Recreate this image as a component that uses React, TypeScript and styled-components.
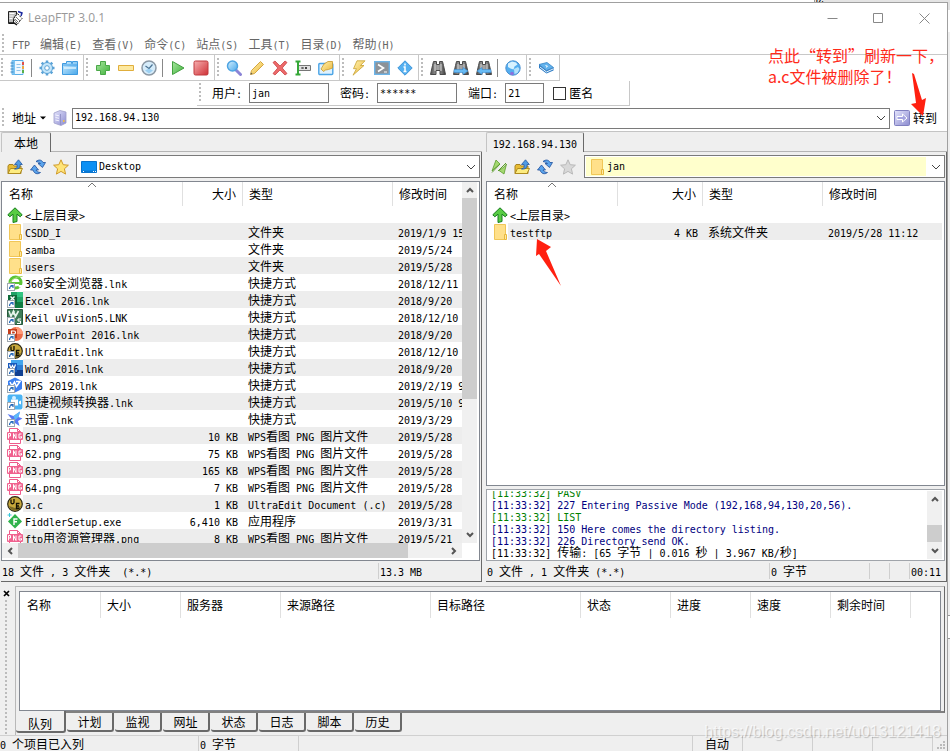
import React from "react";
import styled, { createGlobalStyle, css } from "styled-components";

const Global = createGlobalStyle`
  *, *::before, *::after { box-sizing: border-box; }
  html, body { margin: 0; padding: 0; }
  body {
    font-family: "Noto Sans CJK SC", sans-serif;
    font-size: 12px;
    line-height: 16px;
    color: #000;
    background: #fff;
    overflow: hidden;
  }
  button, input, select { font: inherit; color: inherit; }
  button { padding: 0; border: 0; background: none; }
  svg { display: block; flex: none; }
`;

/* ---------- text ---------- */

const Latin = styled.span`
  font-family: "DejaVu Sans Mono", monospace;
  font-size: 10px;
  line-height: 10px;
  white-space: pre;
`;

/* Half-width characters take half the advance of the Chinese ones. */
function T({ children }: { children: string }) {
  const parts = children.split(/([\u2e80-\uffff]+)/).filter(Boolean);
  return (
    <>
      {parts.map((p, i) =>
        /[\u2e80-\uffff]/.test(p) ? <React.Fragment key={i}>{p}</React.Fragment> : <Latin key={i}>{p}</Latin>
      )}
    </>
  );
}

/* ---------- icons ---------- */

const Svg = ({ children, w = 16, h = 16 }: { children: React.ReactNode; w?: number; h?: number }) => (
  <svg width={w} height={h} viewBox={`0 0 ${w} ${h}`} aria-hidden="true">{children}</svg>
);

const HiddenDefs = styled.svg`
  position: absolute;
`;
const Gradients = () => (
  <HiddenDefs width="0" height="0" aria-hidden="true">
    <defs>
      <linearGradient id="blue" x1="0" y1="0" x2="1" y2="1"><stop offset="0" stopColor="#d4f0ff" /><stop offset="1" stopColor="#4aa8ea" /></linearGradient>
      <linearGradient id="green" x1="0" y1="0" x2="1" y2="1"><stop offset="0" stopColor="#a8e6a0" /><stop offset="1" stopColor="#3fb23a" /></linearGradient>
      <linearGradient id="red" x1="0" y1="0" x2="1" y2="1"><stop offset="0" stopColor="#f6b0b0" /><stop offset="1" stopColor="#cf2f35" /></linearGradient>
      <linearGradient id="gold" x1="0" y1="0" x2="1" y2="1"><stop offset="0" stopColor="#fff3b0" /><stop offset="1" stopColor="#ecb63a" /></linearGradient>
      <linearGradient id="dark" x1="0" y1="0" x2="1" y2="0"><stop offset="0" stopColor="#555" /><stop offset=".5" stopColor="#aaa" /><stop offset="1" stopColor="#3c3c3c" /></linearGradient>
      <linearGradient id="violet" x1="0" y1="0" x2="1" y2="1"><stop offset="0" stopColor="#e4e4fc" /><stop offset="1" stopColor="#8c8cd0" /></linearGradient>
    </defs>
  </HiddenDefs>
);

const AppIcon = () => (
  <Svg>
    <path d="M1.500 1.500h8v3l-3 4v5h-5z" fill="#bdbdbd" stroke="#222" />
    <path d="M2.500 3.500h5M2.500 6h4M2.500 8.500h3" stroke="#fff" />
    <path d="M2 13h5l3 2" stroke="#111" fill="none" strokeWidth="1.500" />
    <path d="M10.500 3.500l4.500 5-4.500 5.500-4-5z" fill="#fff" stroke="#222" strokeDasharray="2 1" />
    <path d="M9 7l4 4M8 9l3 3" stroke="#777" />
    <path d="M11 1.500l4 1.500-1 3" stroke="#1c2aa0" fill="none" strokeWidth="1.500" />
  </Svg>
);
const SiteBook = () => (
  <Svg>
    <path d="M2 .5h11v14H2z" fill="#eef8ff" stroke="#5aaee6" />
    <path d="M2 .5h3v14H2z" fill="#7cc4f2" />
    <path d="M.5 3h3M.5 6h3M.5 9h3M.5 12h3" stroke="#3a86c4" />
    <path d="M6.500 4.500h4M6.500 7.500h4M6.500 10.500h4" stroke="#8fc4ea" />
    <path d="M12 2h2v3h-2z" fill="#e0504a" /><path d="M12 6h2v3h-2z" fill="#f0a840" /><path d="M12 10h2v3h-2z" fill="#58b04a" />
  </Svg>
);
const Gear = () => (
  <Svg>
    <g stroke="#5aa2d6" strokeWidth="2.500">
      <path d="M8 .5v15M.5 8h15M2.700 2.700l10.600 10.600M13.300 2.700L2.700 13.300" />
    </g>
    <circle cx="8" cy="8" r="5.500" fill="#c4e6fa" stroke="#5aa2d6" />
    <circle cx="8" cy="8" r="2.300" fill="#fff" stroke="#5aa2d6" />
  </Svg>
);
const Tabs = () => (
  <Svg>
    <path d="M.5 3.500h4v-2h5v2h1v-2h5v13H.5z" fill="url(#blue)" stroke="#3f9be0" />
    <path d="M1 4.500h14v1H1z" fill="#3f9fe8" />
    <path d="M2 7h12v2H2z" fill="#e4f6ff" opacity=".7" />
  </Svg>
);
const Plus = () => <Svg><path d="M5.500 1.500h5v4h4v5h-4v4h-5v-4h-4v-5h4z" fill="url(#green)" stroke="#4aa848" /></Svg>;
const Minus = () => <Svg><path d="M.5 5.500h15v5H.5z" fill="#fde9a0" stroke="#e0ae3c" /></Svg>;
const Clock = () => (
  <Svg>
    <circle cx="8" cy="8" r="7" fill="#d6ecfa" stroke="#8b98a4" strokeWidth="1.500" />
    <path d="M4 10.500l4-2 4 2-4 3z" fill="#9cd0f2" />
    <path d="M8 8.500l3.500-4M8 8.500L4.500 6" stroke="#4c7494" strokeWidth="1.200" fill="none" />
  </Svg>
);
const Play = () => <Svg><path d="M2.500 1.500L14 8 2.500 14.500z" fill="url(#green)" stroke="#43a040" /></Svg>;
const Stop = () => <Svg><rect x="1" y="1" width="14" height="14" rx="1.500" fill="url(#red)" stroke="#c03a3e" /></Svg>;
const Search = () => (
  <Svg>
    <path d="M10 10l4.500 4.500" stroke="#8b84d6" strokeWidth="3" strokeLinecap="round" />
    <circle cx="6.500" cy="6" r="5" fill="url(#blue)" stroke="#4ea4e2" strokeWidth="1.500" />
  </Svg>
);
const Pencil = () => <Svg><path d="M1.500 14.500l1-4 9-9 3 3-9 9z" fill="url(#gold)" stroke="#d4a640" /><path d="M1.500 14.500l.5-2 1.500 1.500z" fill="#555" /></Svg>;
const Cross = () => <Svg><path d="M1 2.500L3 1l5 5 5-5 2 1.500L10.200 8l4.800 5.500-2 1.500-5-5-5 5-2-1.500L5.800 8z" fill="#ec6a6a" stroke="#cc4448" strokeWidth=".8" /></Svg>;
const Rename = () => (
  <Svg>
    <path d="M3.500 5.500h12v5h-12z" fill="#e0e0e0" stroke="#777" />
    <path d="M6.500 9l2-2M6.500 7l2 2M10 9l2-2M10 7l2 2" stroke="#444" />
    <path d="M.5 1.500h5M3 1.500v13M.5 14.500h5" stroke="#35a838" strokeWidth="2" />
  </Svg>
);
const EditFolder = () => (
  <Svg>
    <rect x=".8" y="3.500" width="14" height="11" rx="1" fill="#dff2ff" stroke="#4aa4e6" strokeWidth="1.400" />
    <path d="M3 9l3-5 4-2.500h4.500V8l-4 1.500-3 .5-2 1.500z" fill="url(#gold)" stroke="#c8982c" strokeWidth=".8" />
  </Svg>
);
const Bolt = () => <Svg><path d="M6 .8h8L9.500 5.500h3.500L2 15.200l3.500-6.500H2.500z" fill="url(#gold)" stroke="#c8a232" strokeWidth=".8" /></Svg>;
const Terminal = () => (
  <Svg>
    <rect x=".7" y="1.700" width="14.600" height="12.600" fill="#8c9298" stroke="#6cb4e8" strokeWidth="1.400" />
    <path d="M4 4.500l5.500 3.500L4 11.500" fill="none" stroke="#fff" strokeWidth="1.600" />
    <path d="M10 12h3" stroke="#fff" />
  </Svg>
);
const Info = () => (
  <Svg>
    <path d="M8 .8L15.200 8 8 15.200.8 8z" fill="#55b0f0" stroke="#3f94d8" />
    <path d="M8 3.500v2M6.500 7H8v4.500M6.500 11.500h3" stroke="#fff" strokeWidth="1.500" fill="none" />
  </Svg>
);
const Glass = ({ arrow }: { arrow?: "left" | "right" }) => (
  <Svg>
    <path d="M3.500 1.500h3v3h3v-3h3l1 4 2 9h-5.500v-4h-4v4H.5l2-9z" fill="url(#dark)" stroke="#4a4a4a" />
    <path d="M5 4v7M11 4v7" stroke="#d8d8d8" />
    {arrow === "right" && <path d="M1 9.500h9v-2l5 3.500-5 3.500v-2H1z" fill="#68bbf4" stroke="#3d8cd0" strokeWidth=".6" />}
    {arrow === "left" && <path d="M15 9.500H6v-2L1 11l5 3.500v-2h9z" fill="#68bbf4" stroke="#3d8cd0" strokeWidth=".6" />}
  </Svg>
);
const Globe = () => (
  <Svg>
    <circle cx="8" cy="8" r="7.200" fill="#54aef0" stroke="#4a90d0" />
    <path d="M3 3.500l4-2 4 1 1.500 2-3 2-1 3-3-1L3 7z" fill="#d8f2ff" />
    <path d="M9 9l4-2 1.500 2-2 4-3 1z" fill="#b4e2fc" />
    <circle cx="7" cy="13.500" r="1.800" fill="#8c70dc" />
  </Svg>
);
const Book = () => (
  <Svg>
    <path d="M1 4.500l8-2 6.500 5-7 3z" fill="#62b2ec" stroke="#3484c8" strokeWidth=".8" />
    <path d="M1 4.500v3.500l7.500 5.500 7-3V7.500l-7 3z" fill="#2f7cc4" />
    <path d="M2 7l6.500 5 6.500-3" stroke="#e8f6ff" fill="none" />
    <path d="M7.500 5.500l2 .8-1.500 1" stroke="#fff" fill="none" />
  </Svg>
);
const Server = () => (
  <Svg>
    <path d="M2 3l6-2.500L14 2v11l-5 2.500L2 13z" fill="url(#violet)" stroke="#a0a0cc" strokeWidth=".8" />
    <path d="M8.500 4v11" stroke="#9494c8" />
    <path d="M3.500 5l3.500.8M3.500 7.500l3.500.8M3.500 10l3.500.8" stroke="#f4f4ff" />
    <path d="M11 10h1.500v2H11z" fill="#f0c040" />
  </Svg>
);
const Go = () => (
  <Svg>
    <rect x=".5" y=".5" width="15" height="15" rx="1" fill="url(#violet)" stroke="#8080c0" />
    <path d="M3 6.500h5.500V4L13 8l-4.500 4V9.500H3z" fill="#a4a4e0" stroke="#fff" />
  </Svg>
);
const UpFolder = () => (
  <Svg>
    <path d="M1 7l1-1.500h4l1 1.500h7v7.500H1z" fill="#e8bc34" stroke="#a88420" />
    <path d="M3.500 9.500h12l-2.500 5H1z" fill="#fdec80" stroke="#b08c20" />
    <path d="M7.500 10c2.500-.5 3-2 2.500-4.500H7.500L11.500.8l3.800 4.700H13c.5 3-1.500 5-5.500 4.500z" fill="#4f9ae4" stroke="#2358a0" strokeWidth=".8" />
  </Svg>
);
const Refresh = () => (
  <Svg>
    <path d="M6 2.500c3-2.500 6-1.500 7 1h2.500l-3 5-4.500-4h2.500c-1-1-2.500-1.500-4.500-2z" fill="#5aa4ec" stroke="#1f4f9c" strokeWidth=".8" />
    <path d="M10.500 13.500c-3 2.500-6.500 1-7.500-2.500H.5l4-5 4 5H6c.5 1.500 2.500 2.500 4.500 2.500z" fill="#5aa4ec" stroke="#1f4f9c" strokeWidth=".8" />
  </Svg>
);
const Star = ({ off }: { off?: boolean }) => (
  <Svg>
    <path d="M8 .8l2.200 4.900 5.200.5-4 3.600 1.200 5.300L8 12.400l-4.600 2.700 1.200-5.300-4-3.600 5.200-.5z" fill={off ? "#d8d8d8" : "#ffe478"} stroke={off ? "#b8b8b8" : "#cf9a28"} />
  </Svg>
);
const Connect = () => (
  <Svg>
    <path d="M1 12L5 1l4 4-5 4z" fill="#a4d870" stroke="#5c9c2c" strokeWidth=".8" />
    <path d="M15.500 5l-2.500 10-5-3.500L13 8z" fill="#a4d870" stroke="#5c9c2c" strokeWidth=".8" />
    <path d="M1 13.500l8-8.500M7 12l8-8" stroke="#5c9c2c" />
  </Svg>
);
const Desktop = () => (
  <Svg>
    <path d="M.5 2.500h15v11H.5z" fill="#0c90f4" stroke="#0872cc" />
    <path d="M1 11.500h14v2H1z" fill="#0878d4" />
    <path d="M2 12.500h1M12 12.500h1M14 12.500h1" stroke="#fff" />
  </Svg>
);
const Folder = () => (
  <Svg>
    <path d="M2.500.5h11v15h-11z" fill="#ffe08a" stroke="#f0c658" />
    <path d="M12.500 10.500h2v5h-2z" fill="#ffe8a4" stroke="#e8b93c" />
  </Svg>
);
const UpArrow = () => <Svg><path d="M8 .8l7.200 7-2 2L10 7.200v7.300l-4 1V7.200L2.800 9.800l-2-2z" fill="#58cc44" stroke="#167c1c" /></Svg>;
const Shortcut = () => (
  <>
    <rect x=".5" y="8.500" width="7" height="7" fill="#fff" stroke="#a0a8b0" />
    <path d="M2.500 14c0-2 1-3 3-3M3.500 10.500H6V13" stroke="#2468b8" strokeWidth="1.200" fill="none" />
  </>
);
const Browser360 = () => (
  <Svg>
    <circle cx="8.500" cy="7.500" r="5.500" fill="none" stroke="#5cc436" strokeWidth="3" />
    <path d="M4 8h10" stroke="#5cc436" strokeWidth="2" /><path d="M11 10h5v2.500h-4z" fill="#fff" />
    <path d="M1 12C2 6 9 1 15.500 1.500" stroke="#a4dc70" fill="none" /><Shortcut />
  </Svg>
);
const Excel = () => (
  <Svg>
    <path d="M4 0h12v16H4z" fill="#21a366" /><path d="M10 0h6v5h-6z" fill="#33c481" /><path d="M4 10h12v6H4z" fill="#107c41" />
    <path d="M1 3h9v9H1z" fill="#0f6b39" /><path d="M3.500 4.500l4 4M7.500 4.500l-4 4" stroke="#fff" strokeWidth="1.400" /><Shortcut />
  </Svg>
);
const Keil = () => (
  <Svg>
    <path d="M.5.500h15v15H.5z" fill="#3e7c58" stroke="#28583c" />
    <path d="M2 2l2 5.500L6.500 2l2 5.500L11.500 2M7 2v4" stroke="#e8f4ec" strokeWidth="1.600" fill="none" />
    <path d="M14 10h-3v2h2.500v2.500H10" stroke="#fff" fill="none" /><Shortcut />
  </Svg>
);
const PowerPoint = () => (
  <Svg>
    <circle cx="9" cy="8" r="7" fill="#ed6c47" /><path d="M9 1a7 7 0 0 1 7 7H9z" fill="#ff9a78" />
    <path d="M1 3h9v9H1z" fill="#c43e1c" /><path d="M4.500 9V5H7a1.500 1.500 0 0 1 0 3H4.500" stroke="#fff" fill="none" strokeWidth="1.200" /><Shortcut />
  </Svg>
);
const UltraEdit = ({ link }: { link?: boolean }) => (
  <Svg>
    <circle cx="8" cy="8" r="7.300" fill="#c8a83c" stroke="#2c2814" strokeWidth="1.200" />
    <path d="M2 10a6.300 6.300 0 0 0 12 0L8 12z" fill="#7c6a24" />
    <path d="M4 3.500v3c0 1.800 3 1.500 3 0V3M12.500 7.500H9.500v5h3M9.500 10h2.500" stroke="#141004" strokeWidth="1.300" fill="none" />
    {link && <Shortcut />}
  </Svg>
);
const Word = () => (
  <Svg>
    <path d="M4 0h12v5H4z" fill="#41a5ee" /><path d="M4 5h12v5H4z" fill="#2b7cd3" /><path d="M4 10h12v6H4z" fill="#103f91" />
    <path d="M1 3h9v9H1z" fill="#185abd" /><path d="M2.500 4.500l1.500 4 1.500-3L7 8.500l1.500-4" stroke="#fff" fill="none" strokeWidth="1.200" /><Shortcut />
  </Svg>
);
const Wps = () => (
  <Svg>
    <path d="M8 .5l7 3.500v8l-7 3.500L1 12V4z" fill="#3c80f0" />
    <path d="M3 5l2 4 2.500-4 2 4.500 3.500-5H9" stroke="#fff" strokeWidth="1.500" fill="none" /><Shortcut />
  </Svg>
);
const Video = () => (
  <Svg>
    <rect x=".5" y=".5" width="15" height="15" rx="2" fill="#4cb4f4" />
    <path d="M4 5.500h7v6H4zM12 7.500l2-1v4l-2-1z" fill="#fff" /><circle cx="7" cy="4" r="2" fill="#d8f0ff" /><Shortcut />
  </Svg>
);
const Thunder = () => (
  <Svg>
    <path d="M.5 3l6 2L13 .5 11.500 6l4 1.500L11 10l1.500 5-4.500-3-5 1 2-4.500z" fill="#5878f4" />
    <path d="M6.500 5L13 .5 11.500 6 8 9z" fill="#5cb8f8" /><Shortcut />
  </Svg>
);
const Png = () => (
  <Svg>
    <path d="M2.500 4V.5h8l3 3V4M2.500 12v3.500h11V12" fill="#fff" stroke="#ee5c8c" />
    <path d="M10.500.5v3h3" fill="none" stroke="#ee5c8c" />
    <rect x="0" y="4" width="16" height="8" rx="1" fill="#f0628f" />
    <path d="M1.500 10.500v-5h2v2.500h-2M6.500 10.500v-5l2.500 5v-5M14.500 6H12v4h2.500V8.500h-1" stroke="#fff" fill="none" />
  </Svg>
);
const Fiddler = () => (
  <Svg>
    <path d="M8 1l7 7.500-7 7L1 8.500z" fill="#2fb24c" />
    <path d="M7 12V6h3.500M7 8.800h3" stroke="#fff" strokeWidth="1.400" fill="none" />
    <path d="M2.500 0v4M.5 2h4" stroke="#38c8dc" />
  </Svg>
);
type Dir = "up" | "down" | "left" | "right";
const chevrons: Record<Dir, string> = {
  up: "M2 7l3-3 3 3", down: "M2 3l3 3 3-3", left: "M7 2L4 5l3 3", right: "M3 2l3 3-3 3",
};
const Chevron = ({ dir }: { dir: Dir }) => (
  <Svg w={10} h={10}><path d={chevrons[dir]} fill="none" stroke="#555" strokeWidth="2" /></Svg>
);
const DropMark = () => <Svg w={10} h={10}><path d="M1 3l4 4 4-4" fill="none" stroke="#444" /></Svg>;
const SortUp = () => <Svg w={10} h={10}><path d="M1 7l4-4 4 4" fill="none" stroke="#777" /></Svg>;

/* ---------- window frame ---------- */

const Screen = styled.div`
  position: relative;
  height: 100vh;
  min-height: 640px;
  display: grid;
  grid-template: 2px minmax(0, 1fr) / minmax(0, 1fr) 2px;
  overflow: hidden;
`;
const Behind = styled.div`
  grid-column: 1 / -1;
  display: flex;
  justify-content: flex-end;
  overflow: hidden;
  background: #fff;
  line-height: 2px;
`;
const BehindTab = styled.div`
  width: 136px;
  border-left: 1px solid #999;
  background: #e4e4e4;
`;
const BehindSide = styled.div`
  background: linear-gradient(#e0e0e0 0 8px, #fff 8px 30px, #efefef 30px 613px, #999 613px 614px, #fff 614px 636px, #999 636px 637px, #efefef 637px);
`;
const Frame = styled.div`
  display: flex;
  flex-direction: column;
  min-width: 0;
  min-height: 0;
  border: solid #a0a0a0;
  border-width: 1px 1px 0 0;
  background: #efefef;
`;
const TitleBar = styled.header`
  display: flex;
  align-items: center;
  gap: 5px;
  height: 30px;
  padding-left: 7px;
  background: #fff;
`;
const Title = styled.h1`
  flex: 1;
  margin: 0;
  font: 400 12px/16px "Open Sans", sans-serif;
  color: #999;
`;
const Captions = styled.div`
  display: flex;
`;
const Caption = styled.button`
  width: 46px;
  height: 28px;
  display: flex;
  align-items: center;
  justify-content: center;
`;
const grip = css`
  background: repeating-linear-gradient(#bcbcbc 0 2px, transparent 2px 4px);
`;
const Grip = styled.i`
  ${grip}
  flex: none;
  width: 2px;
  height: 20px;
`;
const MenuBar = styled.nav`
  display: flex;
  align-items: center;
  gap: 8px;
  height: 22px;
  padding-left: 2px;
  border-bottom: 1px solid #c8c8c8;
  background: #fff;
`;
const MenuItems = styled.div`
  display: flex;
  gap: 10px;
`;
const MenuItem = styled.button`
  white-space: nowrap;
  color: #666;
`;
const IconBar = styled.div`
  display: flex;
  height: 26px;
  background: #fff;
`;
const Band = styled.div<{ $first?: boolean }>`
  display: flex;
  align-items: center;
  border: solid #c8c8c8;
  border-width: 0 1px 1px 0;
  padding: 0 2px 0 ${(p) => (p.$first ? 1 : 2)}px;
`;
const IconButton = styled.button`
  width: 23px;
  height: 23px;
  display: flex;
  align-items: center;
  justify-content: center;
  flex: none;
`;
const Spacer = styled.span`
  width: 3px;
`;
const Rule = styled.span`
  width: 1px;
  height: 18px;
  margin: 0 3px 0 2px;
  background: #888;
`;
const LoginRow = styled.div`
  display: flex;
  height: 25px;
  padding-left: 197px;
  background: #fff;
`;
const LoginBand = styled.form`
  display: flex;
  align-items: center;
  width: 433px;
  padding-left: 2px;
  border: solid #c8c8c8;
  border-width: 0 1px 1px 0;
`;
const Field = styled.label`
  display: flex;
  align-items: center;
  gap: 7px;
  margin-left: 11px;
  white-space: nowrap;
`;
const TextBox = styled.input<{ $w: number }>`
  width: ${(p) => p.$w}px;
  height: 20px;
  padding: 0 2px;
  border: 1px solid #7a7a7a;
  background: #fff;
  font: 10px "DejaVu Sans Mono", monospace;
  outline: 0;
`;
const Check = styled.label`
  display: flex;
  align-items: center;
  gap: 3px;
  margin-left: 9px;
`;
const CheckBox = styled.input`
  appearance: none;
  width: 13px;
  height: 13px;
  margin: 0;
  border: 1px solid #333;
  background: #fff;
`;
const AddressRow = styled.div`
  display: flex;
  align-items: center;
  height: 26px;
  padding: 0 10px 1px 2px;
  border-bottom: 1px solid #c4c4c4;
  background: #fff;
`;
const AddressButton = styled.button`
  display: flex;
  align-items: center;
  gap: 4px;
  margin: 0 6px 0 8px;
  white-space: nowrap;
`;
const Combo = styled.div<{ $h: number }>`
  flex: 1;
  min-width: 0;
  display: flex;
  align-items: center;
  height: ${(p) => p.$h}px;
  padding: 1px 3px 1px 1px;
  border: 1px solid #7a7a7a;
  background: #fff;
`;
const ComboValue = styled.div<{ $tint?: boolean; $pad: number }>`
  flex: 1;
  align-self: stretch;
  display: flex;
  align-items: center;
  gap: 2px;
  margin-right: 5px;
  padding-left: ${(p) => p.$pad}px;
  background: ${(p) => (p.$tint ? "#ffffcc" : "#fff")};
`;
const ComboSelect = styled.select`
  flex: 1;
  appearance: none;
  border: 0;
  padding: 0;
  background: transparent;
  font: 10px/16px "DejaVu Sans Mono", monospace;
  outline: 0;
`;
const GoButton = styled.button`
  display: flex;
  align-items: center;
  gap: 3px;
  margin-left: 4px;
`;

/* ---------- panes ---------- */

const Panes = styled.main`
  flex: 1;
  min-height: 0;
  display: flex;
  gap: 3px;
`;
const Pane = styled.section<{ $grow: number }>`
  flex: ${(p) => p.$grow} 1 0;
  min-width: 0;
  display: flex;
  flex-direction: column;
  padding-left: 1px;
`;
const TabStrip = styled.div`
  display: flex;
  height: 20px;
  border-bottom: 1px solid #b4b4b4;
`;
const PaneTab = styled.button<{ $w: number }>`
  width: ${(p) => p.$w}px;
  height: 20px;
  border: solid;
  border-width: 1px 1px 0 1px;
  border-color: #c4c4c4 #696969 #efefef #c4c4c4;
  border-radius: 2px 2px 0 0;
  background: #efefef;
`;
const PaneBody = styled.div`
  flex: 1;
  min-height: 0;
  display: flex;
  flex-direction: column;
  padding-right: 1px;
  border: solid #696969;
  border-width: 0 1px 1px 0;
`;
const PaneTools = styled.div`
  display: flex;
  align-items: center;
  height: 29px;
  padding-left: 2px;
`;
const ToolGap = styled.span`
  width: 4px;
`;
const ListBox = styled.div<{ $bars?: boolean }>`
  flex: 1;
  min-height: 0;
  display: grid;
  grid-template: minmax(0, 1fr) ${(p) => (p.$bars ? "15px" : "0")} / minmax(0, 1fr) ${(p) => (p.$bars ? "15px" : "0")};
  padding: 0 2px 2px 0;
  border: 1px solid #828790;
  background: #fff;
`;
const Viewport = styled.div`
  overflow: hidden;
`;
const Grid = styled.table<{ $w: number }>`
  width: ${(p) => p.$w}px;
  table-layout: fixed;
  border-collapse: separate;
  border-spacing: 0;
`;
const Th = styled.th<{ $right?: boolean; $head?: number }>`
  position: relative;
  height: ${(p) => p.$head ?? 24}px;
  padding: 0 6px;
  border-right: 1px solid #e0e0e0;
  font-weight: 400;
  text-align: ${(p) => (p.$right ? "right" : "left")};
  white-space: nowrap;
  &:first-child { padding-left: 7px; }
`;
const SortMark = styled.span`
  position: absolute;
  top: -2px;
  left: 0;
  right: 0;
  display: flex;
  justify-content: center;
`;
const Td = styled.td<{ $odd?: boolean; $right?: boolean }>`
  height: 17px;
  padding: 0 5px;
  line-height: 17px;
  white-space: nowrap;
  overflow: hidden;
  text-align: ${(p) => (p.$right ? "right" : "left")};
  background: ${(p) => (p.$odd ? "#ededed" : "transparent")};
`;
const NameTd = styled.td`
  height: 17px;
  padding: 0 0 0 5px;
`;
const NameCell = styled.div`
  display: flex;
  align-items: center;
  height: 17px;
`;
const NameText = styled.span<{ $odd?: boolean }>`
  flex: 1;
  padding-left: 2px;
  line-height: 17px;
  white-space: nowrap;
  background: ${(p) => (p.$odd ? "#ededed" : "transparent")};
`;
const VBar = styled.div`
  display: flex;
  flex-direction: column;
  background: #f0f0f0;
`;
const HBar = styled.div`
  display: flex;
  background: #f0f0f0;
`;
const BarButton = styled.button`
  width: 16px;
  height: 16px;
  flex: none;
  display: flex;
  align-items: center;
  justify-content: center;
`;
const Thumb = styled.div<{ $grow: number }>`
  flex: ${(p) => p.$grow} 1 0;
  background: #cdcdcd;
`;
const Track = styled.div<{ $grow: number }>`
  flex: ${(p) => p.$grow} 1 0;
`;
const LogBox = styled.div`
  height: 72px;
  margin-top: 3px;
  display: grid;
  grid-template-columns: minmax(0, 1fr) 15px;
  padding: 1px 2px 1px 4px;
  border: 1px solid #a0a4aa;
  background: #fff;
`;
const LogLines = styled.div`
  display: flex;
  flex-direction: column;
  justify-content: flex-end;
  padding-bottom: 1px;
  overflow: hidden;
`;
const LogLine = styled.div<{ $c: string }>`
  flex: none;
  height: 12px;
  line-height: 12px;
  white-space: nowrap;
  color: ${(p) => p.$c};
`;
const StatusLine = styled.div`
  display: flex;
  align-items: center;
  height: 20px;
`;
const Status = styled.span<{ $w?: number; $pad?: number }>`
  flex: ${(p) => (p.$w ? `0 0 ${p.$w}px` : "1")};
  height: 16px;
  padding-left: ${(p) => p.$pad ?? 1}px;
  white-space: nowrap;
  & + & { border-left: 1px solid #cfcfcf; }
`;

/* ---------- queue dock ---------- */

const Dock = styled.section`
  display: flex;
  height: 149px;
  margin-top: 4px;
  padding-right: 2px;
`;
const DockSide = styled.div`
  width: 15px;
  display: flex;
  flex-direction: column;
  gap: 3px;
  padding: 4px 0 0 3px;
`;
const DockClose = styled.button`
  width: 7px;
`;
const DockGrip = styled.i`
  ${grip}
  width: 2px;
  height: 136px;
  margin-left: 2px;
`;
const DockMain = styled.div`
  flex: 1;
  min-width: 0;
  display: flex;
  flex-direction: column;
  border-left: 1px solid #b8b8b8;
`;
const DockFrame = styled.div`
  flex: 1;
  display: flex;
  padding: 4px 3px 0 3px;
  border: solid #b8b8b8;
  border-width: 1px 1px 2px 0;
  border-right-color: #696969;
  border-bottom-color: #808080;
`;
const DockTabs = styled.div`
  display: flex;
  gap: 1px;
  height: 22px;
`;
const DockTab = styled.button<{ $active?: boolean }>`
  width: ${(p) => (p.$active ? 50 : 47)}px;
  height: ${(p) => (p.$active ? 22 : 19)}px;
  margin-top: ${(p) => (p.$active ? -2 : 0)}px;
  padding-top: ${(p) => (p.$active ? 5 : 1)}px;
  border: solid #696969;
  border-width: 0 2px 2px 0;
  border-radius: 0 0 3px 3px;
  background: #efefef;
`;
const Footer = styled.footer`
  display: flex;
  height: 16px;
  flex: none;
  border-top: 1px solid #d0d0d0;
`;

/* ---------- overlays ---------- */

const Note = styled.p`
  position: absolute;
  top: 45px;
  right: 6px;
  width: 176px;
  margin: 0;
  font-size: 16px;
  line-height: 21px;
  color: #ff2a1a;
  white-space: nowrap;
`;
const Arrows = styled.div`
  position: absolute;
  inset: 0;
  pointer-events: none;
`;
const Watermark = styled.span`
  position: absolute;
  right: 9px;
  bottom: 10px;
  font: 16px/18px "Liberation Sans", sans-serif;
  color: rgba(255, 255, 255, 0.7);
  text-shadow: 1px 1px 1px rgba(0, 0, 0, 0.2);
`;

/* ---------- data ---------- */

type Row = { icon: React.ReactNode; name: string; size?: string; type: string; date: string };

const LINK = "快捷方式";
const IMG = "WPS看图 PNG 图片文件";
const localRows: Row[] = [
  { icon: <Folder />, name: "CSDD_I", type: "文件夹", date: "2019/1/9 15" },
  { icon: <Folder />, name: "samba", type: "文件夹", date: "2019/5/24" },
  { icon: <Folder />, name: "users", type: "文件夹", date: "2019/5/28" },
  { icon: <Browser360 />, name: "360安全浏览器.lnk", type: LINK, date: "2018/12/11" },
  { icon: <Excel />, name: "Excel 2016.lnk", type: LINK, date: "2018/9/20" },
  { icon: <Keil />, name: "Keil uVision5.LNK", type: LINK, date: "2018/12/10" },
  { icon: <PowerPoint />, name: "PowerPoint 2016.lnk", type: LINK, date: "2018/9/20" },
  { icon: <UltraEdit link />, name: "UltraEdit.lnk", type: LINK, date: "2018/12/10" },
  { icon: <Word />, name: "Word 2016.lnk", type: LINK, date: "2018/9/20" },
  { icon: <Wps />, name: "WPS 2019.lnk", type: LINK, date: "2019/2/19 9" },
  { icon: <Video />, name: "迅捷视频转换器.lnk", type: LINK, date: "2019/5/10 9" },
  { icon: <Thunder />, name: "迅雷.lnk", type: LINK, date: "2019/3/29" },
  { icon: <Png />, name: "61.png", size: "10 KB", type: IMG, date: "2019/5/28" },
  { icon: <Png />, name: "62.png", size: "75 KB", type: IMG, date: "2019/5/28" },
  { icon: <Png />, name: "63.png", size: "165 KB", type: IMG, date: "2019/5/28" },
  { icon: <Png />, name: "64.png", size: "7 KB", type: IMG, date: "2019/5/28" },
  { icon: <UltraEdit />, name: "a.c", size: "1 KB", type: "UltraEdit Document (.c)", date: "2019/5/28" },
  { icon: <Fiddler />, name: "FiddlerSetup.exe", size: "6,410 KB", type: "应用程序", date: "2019/3/31" },
  { icon: <Png />, name: "ftp用资源管理器.png", size: "8 KB", type: IMG, date: "2019/5/21" },
];
const remoteRows: Row[] = [
  { icon: <Folder />, name: "testftp", size: "4 KB", type: "系统文件夹", date: "2019/5/28 11:12" },
];
const log: [string, string][] = [
  ["#008000", "[11:33:32] PASV"],
  ["#000080", "[11:33:32] 227 Entering Passive Mode (192,168,94,130,20,56)."],
  ["#008000", "[11:33:32] LIST"],
  ["#000080", "[11:33:32] 150 Here comes the directory listing."],
  ["#000080", "[11:33:32] 226 Directory send OK."],
  ["#000000", "[11:33:32] 传输: [65 字节 | 0.016 秒 | 3.967 KB/秒]"],
];
const bands: [string, React.ReactNode][][] = [
  [["站点管理", <SiteBook />], ["|", null], ["选项", <Gear />], ["标签", <Tabs />]],
  [["添加", <Plus />], ["移除", <Minus />], ["计划", <Clock />], ["|", null], ["开始", <Play />], ["停止", <Stop />]],
  [["查看", <Search />], ["编辑", <Pencil />], ["删除", <Cross />], ["重命名", <Rename />], ["属性", <EditFolder />]],
  [["快速连接", <Bolt />], ["命令", <Terminal />], ["信息", <Info />]],
  [["查找", <Glass />], ["查找下一个", <Glass arrow="right" />], ["查找上一个", <Glass arrow="left" />], ["|", null], ["网页", <Globe />]],
  [["帮助", <Book />]],
];
const menus = ["FTP", "编辑(E)", "查看(V)", "命令(C)", "站点(S)", "工具(T)", "目录(D)", "帮助(H)"];
const queueCols: [string, number][] = [
  ["名称", 81], ["大小", 80], ["服务器", 100], ["来源路径", 150], ["目标路径", 150], ["状态", 90], ["进度", 80], ["速度", 80], ["剩余时间", 80],
];

function FileTable({ rows, cols }: { rows: Row[]; cols: number[] }) {
  return (
    <Grid $w={cols.reduce((a, b) => a + b, 0)}>
      <colgroup>{cols.map((w, i) => <col key={i} width={w} />)}</colgroup>
      <thead>
        <tr>
          <Th scope="col">名称<SortMark><SortUp /></SortMark></Th>
          <Th scope="col" $right>大小</Th>
          <Th scope="col">类型</Th>
          <Th scope="col">修改时间</Th>
        </tr>
      </thead>
      <tbody>
        <tr>
          <NameTd colSpan={4}><NameCell><UpArrow /><NameText><T>{"<上层目录>"}</T></NameText></NameCell></NameTd>
        </tr>
        {rows.map((r, i) => {
          const odd = i % 2 === 0;
          return (
            <tr key={r.name}>
              <NameTd><NameCell>{r.icon}<NameText $odd={odd}><T>{r.name}</T></NameText></NameCell></NameTd>
              <Td $odd={odd} $right><T>{r.size ?? ""}</T></Td>
              <Td $odd={odd}><T>{r.type}</T></Td>
              <Td $odd={odd}><T>{r.date}</T></Td>
            </tr>
          );
        })}
      </tbody>
    </Grid>
  );
}

const Tool = ({ label, children }: { label: string; children: React.ReactNode }) => (
  <IconButton type="button" aria-label={label}>{children}</IconButton>
);

export default function App() {
  return (
    <Screen>
      <Global />
      <Behind><BehindTab>库</BehindTab></Behind>
      <Frame>
        <Gradients />
        <TitleBar>
          <AppIcon />
          <Title>LeapFTP 3.0.1</Title>
          <Captions>
            <Caption aria-label="最小化"><Svg w={11} h={11}><path d="M.5 5.500h10" stroke="#888" /></Svg></Caption>
            <Caption aria-label="最大化"><Svg w={11} h={11}><path d="M.5.500h9v9h-9z" fill="none" stroke="#888" /></Svg></Caption>
            <Caption aria-label="关闭"><Svg w={11} h={11}><path d="M.5.500l10 10M10.500.5l-10 10" stroke="#888" /></Svg></Caption>
          </Captions>
        </TitleBar>
        <MenuBar>
          <Grip />
          <MenuItems>
            {menus.map((m) => <MenuItem key={m}><T>{m}</T></MenuItem>)}
          </MenuItems>
        </MenuBar>
        <IconBar>
          {bands.map((b, i) => (
            <Band key={i} $first={i === 0}>
              <Grip /><Spacer />
              {b.map(([label, icon], j) => (icon ? <Tool key={j} label={label}>{icon}</Tool> : <Rule key={j} />))}
            </Band>
          ))}
        </IconBar>
        <LoginRow>
          <LoginBand>
            <Grip />
            <Field><span><T>用户:</T></span><TextBox $w={80} defaultValue="jan" /></Field>
            <Field><span><T>密码:</T></span><TextBox $w={80} defaultValue="******" /></Field>
            <Field><span><T>端口:</T></span><TextBox $w={39} defaultValue="21" /></Field>
            <Check><CheckBox type="checkbox" />匿名</Check>
          </LoginBand>
        </LoginRow>
        <AddressRow>
          <Grip />
          <AddressButton>地址<Svg w={6} h={4}><path d="M0 .5h6l-3 3z" /></Svg></AddressButton>
          <Server />
          <ToolGap />
          <Combo $h={21}>
            <ComboValue $pad={1}>
              <ComboSelect aria-label="地址"><option>192.168.94.130</option></ComboSelect>
            </ComboValue>
            <DropMark />
          </Combo>
          <GoButton><Go />转到</GoButton>
        </AddressRow>

        <Panes>
          <Pane $grow={482}>
            <TabStrip><PaneTab $w={50}>本地</PaneTab></TabStrip>
            <PaneBody>
              <PaneTools>
                <Tool label="上层目录"><UpFolder /></Tool>
                <Tool label="刷新"><Refresh /></Tool>
                <Tool label="收藏"><Star /></Tool>
                <ToolGap />
                <Combo $h={23}>
                  <ComboValue $pad={3}>
                    <Desktop />
                    <ComboSelect aria-label="本地目录"><option>Desktop</option></ComboSelect>
                  </ComboValue>
                  <DropMark />
                </Combo>
              </PaneTools>
              <ListBox $bars>
                <Viewport><FileTable rows={localRows} cols={[181, 60, 150, 100]} /></Viewport>
                <VBar>
                  <BarButton aria-label="向上"><Chevron dir="up" /></BarButton>
                  <Thumb $grow={200} /><Track $grow={128} />
                  <BarButton aria-label="向下"><Chevron dir="down" /></BarButton>
                </VBar>
                <HBar>
                  <BarButton aria-label="向左"><Chevron dir="left" /></BarButton>
                  <Thumb $grow={388} /><Track $grow={38} />
                  <BarButton aria-label="向右"><Chevron dir="right" /></BarButton>
                </HBar>
              </ListBox>
              <StatusLine>
                <Status><T>18 文件 , 3 文件夹  (*.*)</T></Status>
                <Status $w={102}><T>13.3 MB</T></Status>
              </StatusLine>
            </PaneBody>
          </Pane>

          <Pane $grow={462}>
            <TabStrip><PaneTab $w={98}><T>192.168.94.130</T></PaneTab></TabStrip>
            <PaneBody>
              <PaneTools>
                <Tool label="连接"><Connect /></Tool>
                <Tool label="上层目录"><UpFolder /></Tool>
                <Tool label="刷新"><Refresh /></Tool>
                <Tool label="收藏"><Star off /></Tool>
                <ToolGap />
                <Combo $h={23}>
                  <ComboValue $tint $pad={3}>
                    <Folder />
                    <ComboSelect aria-label="远程目录"><option>jan</option></ComboSelect>
                  </ComboValue>
                  <DropMark />
                </Combo>
              </PaneTools>
              <ListBox>
                <Viewport><FileTable rows={remoteRows} cols={[131, 85, 120, 120]} /></Viewport>
              </ListBox>
              <LogBox>
                <LogLines>
                  {log.map(([c, s], i) => <LogLine key={i} $c={c}><T>{s}</T></LogLine>)}
                </LogLines>
                <VBar>
                  <BarButton aria-label="向上"><Chevron dir="up" /></BarButton>
                  <Track $grow={18} /><Thumb $grow={17} /><Track $grow={1} />
                  <BarButton aria-label="向下"><Chevron dir="down" /></BarButton>
                </VBar>
              </LogBox>
              <StatusLine>
                <Status><T>0 文件 , 1 文件夹 (*.*)</T></Status>
                <Status $w={100}><T>0 字节</T></Status>
                <Status $w={20} />
                <Status $w={20} />
                <Status $w={36}><T>00:11</T></Status>
              </StatusLine>
            </PaneBody>
          </Pane>
        </Panes>

        <Dock>
          <DockSide>
            <DockClose aria-label="关闭面板"><Svg w={7} h={7}><path d="M1 1l5 5M6 1L1 6" stroke="#000" strokeWidth="1.700" /></Svg></DockClose>
            <DockGrip />
          </DockSide>
          <DockMain>
            <DockFrame>
              <ListBox>
                <Viewport>
                  <Grid $w={queueCols.reduce((a, c) => a + c[1], 0)}>
                    <colgroup>{queueCols.map(([n, w]) => <col key={n} width={w} />)}</colgroup>
                    <thead><tr>{queueCols.map(([n]) => <Th key={n} scope="col" $head={26}>{n}</Th>)}</tr></thead>
                  </Grid>
                </Viewport>
              </ListBox>
            </DockFrame>
            <DockTabs>
              {["队列", "计划", "监视", "网址", "状态", "日志", "脚本", "历史"].map((t, i) => (
                <DockTab key={t} $active={i === 0}>{t}</DockTab>
              ))}
            </DockTabs>
          </DockMain>
        </Dock>
        <Footer>
          <Status $w={198} $pad={0}><T>0 个项目已入列</T></Status>
          <Status $w={100}><T>0 字节</T></Status>
          <Status />
          <Status $w={50} $pad={12}>自动</Status>
          <Status $w={70} />
          <Status $w={60} />
          <Status $w={60} />
          <Status $w={15}>
            <Svg w={12} h={14}><path d="M9 5h2v2H9zM6 8h2v2H6zM9 8h2v2H9zM3 11h2v2H3zM6 11h2v2H6zM9 11h2v2H9z" fill="#bbb" /></Svg>
          </Status>
        </Footer>
      </Frame>
      <BehindSide />
      <Note>点此“转到”刷新一下，<br />a.c文件被删除了！</Note>
      <Arrows>
        <svg width="950" height="300" viewBox="0 0 950 300" aria-hidden="true">
          <path d="M912 73l2 1 8 26 4-2-3 18-12-12 5-1z" fill="#ff2010" />
          <path d="M537 239l14 8-5 4 15 35-22-32-3 2z" fill="#ff2010" />
        </svg>
      </Arrows>
      <Watermark>https://blog.csdn.net/u013121418</Watermark>
    </Screen>
  );
}
